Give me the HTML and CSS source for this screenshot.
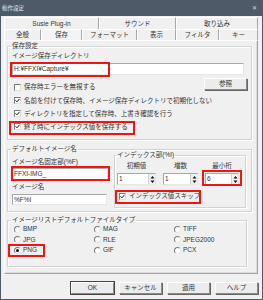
FILE: index.html
```html
<!DOCTYPE html>
<html lang="ja">
<head>
<meta charset="utf-8">
<title>動作設定</title>
<link rel="stylesheet" href="styles.css">
</head>
<body>
<div class="window">
  <div class="titlebar"><span class="title">動作設定</span><span class="close">✕</span></div>
  <div class="client">
    <div class="tabs">
      <div class="tabrow back">
        <div class="tab t-susie">Susie Plug-in</div>
        <div class="tab t-sound">サウンド</div>
        <div class="tab t-cap">取り込み</div>
      </div>
      <div class="tabrow front">
        <div class="tab t-gen">全般</div>
        <div class="tab t-save sel">保存</div>
        <div class="tab t-fmt">フォーマット</div>
        <div class="tab t-view">表示</div>
        <div class="tab t-filt">フィルタ</div>
        <div class="tab t-key">キー</div>
      </div>
    </div>
    <div class="panel">
      <fieldset class="group g-save">
        <legend>保存設定</legend>
        <div class="lbl first">イメージ保存ディレクトリ</div>
        <div class="field dir">H:¥FFXI¥Capture¥</div>
        <div class="row-ref">
          <label class="cb"><span class="box"></span>保存時エラーを無視する</label>
          <div class="btn small">参照</div>
        </div>
        <label class="cb r13 first"><span class="box on"><svg width="5" height="5" viewBox="0 0 5 5"><path d="M0.5 2.3 L2 3.8 L4.6 0.8" fill="none" stroke="#111" stroke-width="1"/></svg></span>名前を付けて保存時、イメージ保存ディレクトリで初期化しない</label>
        <label class="cb r13"><span class="box on"><svg width="5" height="5" viewBox="0 0 5 5"><path d="M0.5 2.3 L2 3.8 L4.6 0.8" fill="none" stroke="#111" stroke-width="1"/></svg></span>ディレクトリを指定して保存時、上書き確認を行う</label>
        <label class="cb r13"><span class="box on"><svg width="5" height="5" viewBox="0 0 5 5"><path d="M0.5 2.3 L2 3.8 L4.6 0.8" fill="none" stroke="#111" stroke-width="1"/></svg></span>終了時にインデックス値を保存する</label>
      </fieldset>

      <fieldset class="group g-name">
        <legend>デフォルトイメージ名</legend>
        <div class="name-body">
          <div class="name-left">
            <div class="lbl l1">イメージ名固定部(%F)</div>
            <div class="field f1">FFXI-IMG_</div>
            <div class="lbl l2">イメージ名</div>
            <div class="field f2">%F%I</div>
          </div>
          <fieldset class="group g-index">
            <legend>インデックス部(%I)</legend>
            <div class="spins">
              <div class="spincol c1"><div class="slbl">初期値</div><div class="spin"><span class="sval">1</span><span class="arrows"><svg width="5" height="9" viewBox="0 0 5 9"><path d="M2.5 1 L4.5 3.5 L0.5 3.5Z M0.5 5.5 L4.5 5.5 L2.5 8Z" fill="#111"/></svg></span></div></div>
              <div class="spincol c2"><div class="slbl">増数</div><div class="spin"><span class="sval">1</span><span class="arrows"><svg width="5" height="9" viewBox="0 0 5 9"><path d="M2.5 1 L4.5 3.5 L0.5 3.5Z M0.5 5.5 L4.5 5.5 L2.5 8Z" fill="#111"/></svg></span></div></div>
              <div class="spincol c3"><div class="slbl">最小桁</div><div class="spin"><span class="sval">6</span><span class="arrows"><svg width="5" height="9" viewBox="0 0 5 9"><path d="M2.5 1 L4.5 3.5 L0.5 3.5Z M0.5 5.5 L4.5 5.5 L2.5 8Z" fill="#111"/></svg></span></div></div>
            </div>
            <label class="cb skip"><span class="box on"><svg width="5" height="5" viewBox="0 0 5 5"><path d="M0.5 2.3 L2 3.8 L4.6 0.8" fill="none" stroke="#111" stroke-width="1"/></svg></span>インデックス値スキップ</label>
          </fieldset>
        </div>
      </fieldset>

      <fieldset class="group g-type">
        <legend>イメージリストデフォルトファイルタイプ</legend>
        <div class="radios">
          <label class="rb"><span class="dot"></span>BMP</label>
          <label class="rb"><span class="dot"></span>JPG</label>
          <label class="rb"><span class="dot on"></span>PNG</label>
          <label class="rb"><span class="dot"></span>MAG</label>
          <label class="rb"><span class="dot"></span>RLE</label>
          <label class="rb"><span class="dot"></span>GIF</label>
          <label class="rb"><span class="dot"></span>TIFF</label>
          <label class="rb"><span class="dot"></span>JPEG2000</label>
          <label class="rb"><span class="dot"></span>PCX</label>
        </div>
      </fieldset>
    </div>
    <div class="buttons">
      <div class="btn def">OK</div>
      <div class="btn">キャンセル</div>
      <div class="btn">適用</div>
      <div class="btn">ヘルプ</div>
    </div>
  </div>

  <div class="mark m-dir"></div>
  <div class="mark m-end"></div>
  <div class="mark m-fixed"></div>
  <div class="mark m-min"></div>
  <div class="mark m-skip"></div>
  <div class="mark m-png"></div>
</div>
</body>
</html>
```

FILE: styles.css
```css
* { box-sizing: border-box; }
html, body { margin: 0; padding: 0; }
body {
  width: 263px;
  height: 300px;
  overflow: hidden;
  background: #f0f0f0;
  font-family: "Liberation Sans", "Noto Sans CJK JP", sans-serif;
  font-size: 6.5px;
  line-height: 8px;
  color: #333333;
}
.window {
  position: relative;
  width: 263px;
  height: 300px;
  display: flex;
  flex-direction: column;
  background: #4e5a67;
}
.titlebar {
  height: 16px;
  flex: none;
  display: flex;
  align-items: center;
  justify-content: space-between;
  padding: 0 6px 0 2px;
  color: #e4e7ea;
}
.title { font-size: 5.5px; }
.close { font-size: 6px; color: #d6dadf; }
.client {
  flex: 1;
  margin: 0 1px 1px 1px;
  background: #f0f0f0;
  padding: 1px 4px 0 3px;
  display: flex;
  flex-direction: column;
}

/* tabs */
.tabrow { display: flex; }
.back { height: 12px; }
.front { height: 11px; }
.tab {
  display: flex;
  align-items: center;
  justify-content: center;
  border-top: 1px solid #ffffff;
  border-left: 1px solid #ffffff;
  border-right: 1px solid #a8a8a8;
  white-space: nowrap;
}
.t-susie { width: 95px; }
.t-sound { width: 77px; }
.t-cap { width: 82px; }
.t-gen { width: 37px; }
.t-save { width: 41px; }
.t-fmt { width: 55px; }
.t-view { width: 39px; }
.t-filt { width: 43px; }
.t-key { width: 39px; }
.tab.sel { background: #f4f4f4; }

/* panel */
.panel {
  flex: none;
  height: 234px;
  border: 1px solid;
  border-color: #fdfdfd #a4a4a4 #a4a4a4 #fdfdfd;
  box-shadow: inset -1px -1px 0 #dcdcdc;
  padding: 1px 5px 0 2px;
  display: flex;
  flex-direction: column;
}
.group {
  margin: 0;
  padding: 0 4px;
  min-width: 0;
  border: 1px solid #d3d3d3;
  box-shadow: inset 1px 1px 0 #ffffff, 1px 1px 0 #ffffff;
}
.group legend {
  padding: 0 1px;
  margin-left: -1px;
  line-height: 8px;
  height: 8px;
}
.lbl { line-height: 8px; white-space: nowrap; }
.lbl.first { margin-top: 2px; }
.field {
  background: #ffffff;
  border: 1px solid;
  border-color: #a8a8a8 #e6e6e6 #e6e6e6 #a8a8a8;
  padding: 0 1px;
  display: flex;
  align-items: center;
  white-space: nowrap;
}
.field.dir { margin-top: 3px; height: 12px; width: 232px; }

.row-ref {
  margin-top: 3px;
  height: 13px;
  display: flex;
  justify-content: space-between;
  align-items: flex-end;
}
.cb {
  display: flex;
  align-items: center;
  gap: 3px;
  padding-left: 2px;
  white-space: nowrap;
  height: 8px;
}
.cb.r13 { height: 13px; }
.cb.r13.first { margin-top: 3px; }
.box {
  width: 7px;
  height: 7px;
  flex: none;
  background: #ffffff;
  border: 1px solid;
  border-color: #7a7a7a #dedede #dedede #7a7a7a;
  display: flex;
  align-items: center;
  justify-content: center;
}
.btn {
  width: 43px;
  height: 12px;
  display: flex;
  align-items: center;
  justify-content: center;
  background: #ececec;
  border: 1px solid;
  border-color: #fdfdfd #8a8a8a #8a8a8a #fdfdfd;
  box-shadow: 1px 1px 0 #666666;
  white-space: nowrap;
}
.btn.small { height: 12px; margin-bottom: 1px; }
.btn.def { box-shadow: 0 0 0 1px #444444; }
.g-save { padding-bottom: 6px; }

/* default image name */
.g-name { margin-top: 5px; padding-bottom: 3px; }
.name-body { display: flex; align-items: flex-start; gap: 2px; }
.name-left { width: 100px; flex: none; }
.lbl.l1 { margin-top: 5px; }
.field.f1 { margin-top: 2px; height: 12px; width: 96px; }
.lbl.l2 { margin-top: 3px; }
.field.f2 { margin-top: 3px; height: 11px; width: 95px; }
.g-index {
  width: 132px;
  flex: none;
  margin-top: -2px;
  padding: 0 2px 5px 2px;
}
.spins { display: flex; gap: 7px; padding-top: 3px; }
.spincol { display: flex; flex-direction: column; align-items: stretch; }
.c1 { width: 39px; }
.c2 { width: 35px; }
.c3 { width: 34px; }
.slbl { text-align: center; line-height: 8px; white-space: nowrap; }
.spin {
  margin-top: 3px;
  height: 12px;
  background: #ffffff;
  border: 1px solid;
  border-color: #a8a8a8 #e6e6e6 #e6e6e6 #a8a8a8;
  display: flex;
  align-items: center;
  justify-content: space-between;
  padding-left: 1px;
}
.arrows {
  width: 7px;
  height: 10px;
  display: flex;
  align-items: center;
  justify-content: center;
  background: #f0f0f0;
  border-left: 1px solid #cfcfcf;
}
.cb.skip { margin-top: 5px; height: 12px; padding-left: 2px; }

/* file type */
.g-type { margin-top: 4px; margin-right: 5px; padding-bottom: 11px; }
.radios {
  display: grid;
  grid-auto-flow: column;
  grid-template-columns: 80px 80px auto;
  grid-template-rows: 10px 11px 10px;
}
.rb {
  display: flex;
  align-items: center;
  gap: 2px;
  padding-left: 2px;
  white-space: nowrap;
}
.dot {
  width: 7px;
  height: 7px;
  flex: none;
  border-radius: 50%;
  background: #ffffff;
  border: 1px solid;
  border-color: #7a7a7a #e8e8e8 #e8e8e8 #7a7a7a;
  display: flex;
  align-items: center;
  justify-content: center;
}
.dot.on::after {
  content: "";
  width: 3px;
  height: 3px;
  border-radius: 50%;
  background: #111;
}

/* buttons */
.buttons {
  margin-top: 8px;
  display: flex;
  justify-content: flex-end;
  gap: 5px;
}

/* red annotation boxes laid over the dialog */
.mark {
  position: absolute;
  border: 2px solid #f01414;
}
.m-dir { left: 10px; top: 62px; width: 100px; height: 15px; }
.m-end { left: 9px; top: 121px; width: 126px; height: 14px; }
.m-fixed { left: 11px; top: 166px; width: 99px; height: 15px; }
.m-min { left: 202px; top: 170px; width: 40px; height: 16px; }
.m-skip { left: 115px; top: 190px; width: 86px; height: 14px; }
.m-png { left: 8px; top: 244px; width: 37px; height: 13px; }
```
